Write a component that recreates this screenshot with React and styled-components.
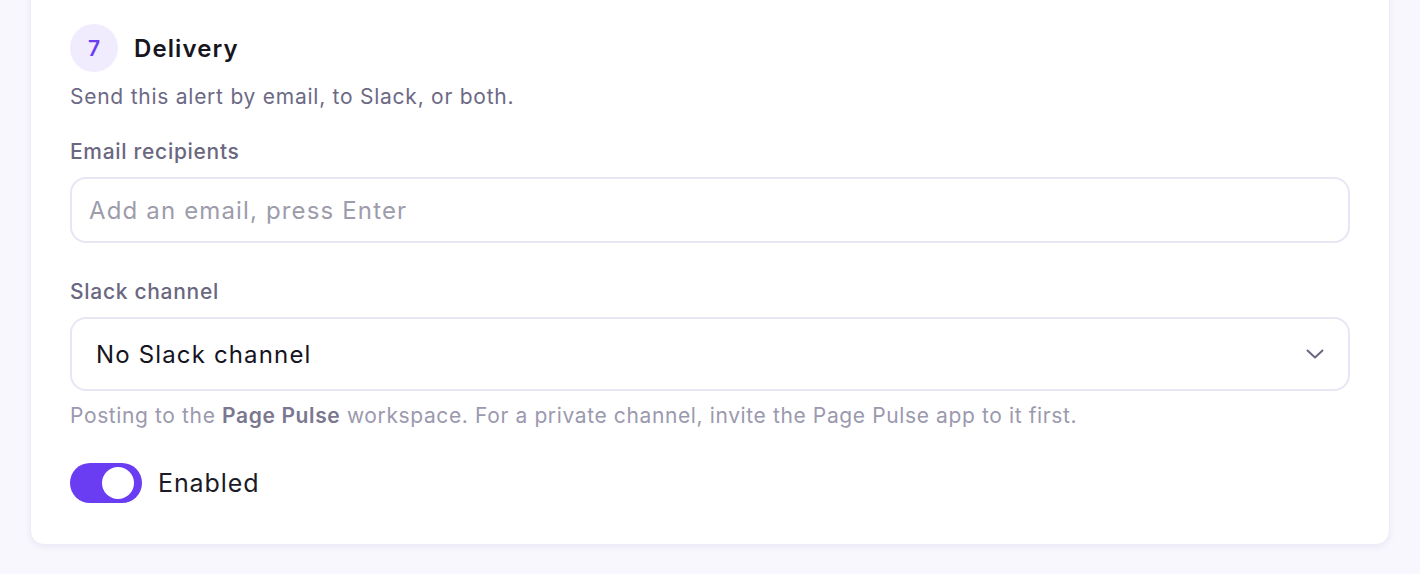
import React, { useState } from "react";
import styled, { createGlobalStyle } from "styled-components";

const GlobalStyle = createGlobalStyle`
  html, body {
    margin: 0;
    padding: 0;
    background: #f8f7fd;
    font-family: "Inter", "Lato", sans-serif;
    -webkit-font-smoothing: antialiased;
  }
`;

const Page = styled.div`
  padding: 0 30px 30px;
  min-height: 574px;
  box-sizing: border-box;
`;

const Card = styled.section`
  margin-top: -20px;
  background: #ffffff;
  border-radius: 14px;
  border: 1px solid #eeedf7;
  box-shadow: 0 2px 6px rgba(60, 40, 140, 0.07);
  padding: 43px 39px 41px;
  display: flex;
  flex-direction: column;
`;

const Header = styled.div`
  display: flex;
  align-items: center;
  gap: 16px;
`;

const StepBadge = styled.div`
  width: 48px;
  height: 48px;
  border-radius: 50%;
  background: #f0ecfd;
  color: #6a3df0;
  font-size: 21px;
  font-weight: 600;
  display: flex;
  align-items: center;
  justify-content: center;
`;

const Title = styled.h2`
  margin: 0;
  font-size: 24px;
  font-weight: 600;
  letter-spacing: 1.1px;
  color: #17161f;
`;

const Subtitle = styled.p`
  margin: 11px 0 0;
  font-size: 21px;
  line-height: 28px;
  letter-spacing: 0.75px;
  color: #6c6985;
`;

const Field = styled.div`
  display: flex;
  flex-direction: column;
  margin-top: ${(p) => p.$top}px;
`;

const Label = styled.label`
  font-size: 21px;
  line-height: 28px;
  font-weight: 500;
  letter-spacing: 0.7px;
  color: #6a6780;
  margin-bottom: 11px;
`;

const TextInput = styled.input`
  box-sizing: border-box;
  height: 66px;
  border: 2px solid #e8e6f5;
  border-radius: 16px;
  padding: 0 17px;
  font-family: inherit;
  font-size: 24px;
  letter-spacing: 1.15px;
  color: #15141e;
  outline: none;
  &::placeholder {
    color: #9d9cab;
  }
`;

const SelectBox = styled.div`
  box-sizing: border-box;
  height: 74px;
  border: 2px solid #e8e6f5;
  border-radius: 16px;
  padding: 0 24px 0 24px;
  display: flex;
  align-items: center;
  justify-content: space-between;
  font-size: 24px;
  letter-spacing: 1.15px;
  color: #15141e;
  cursor: pointer;
`;

const Help = styled.p`
  margin: 11px 0 0;
  font-size: 21px;
  line-height: 28px;
  letter-spacing: 0.62px;
  color: #9b99ae;

  strong {
    color: #7a778f;
    font-weight: 600;
  }
`;

const ToggleRow = styled.div`
  display: flex;
  align-items: center;
  gap: 16px;
  margin-top: 33px;
`;

const Track = styled.button`
  position: relative;
  width: 72px;
  height: 40px;
  border: none;
  padding: 0;
  border-radius: 20px;
  background: ${(p) => (p.$on ? "#6a3cf2" : "#d9d7e6")};
  cursor: pointer;
`;

const Knob = styled.span`
  position: absolute;
  top: 4px;
  left: ${(p) => (p.$on ? "32px" : "4px")};
  width: 32px;
  height: 32px;
  border-radius: 50%;
  background: #ffffff;
`;

const ToggleLabel = styled.span`
  font-size: 25px;
  letter-spacing: 0.9px;
  color: #1b1a26;
`;

const Chevron = () => (
  <svg width="18" height="10" viewBox="0 0 18 10" fill="none">
    <path
      d="M1.5 1.5 9 8.5l7.5-7"
      stroke="#6a6780"
      strokeWidth="2"
      strokeLinecap="round"
      strokeLinejoin="round"
    />
  </svg>
);

export default function App() {
  const [enabled, setEnabled] = useState(true);
  return (
    <Page>
      <GlobalStyle />
      <Card>
        <Header>
          <StepBadge>7</StepBadge>
          <Title>Delivery</Title>
        </Header>
        <Subtitle>Send this alert by email, to Slack, or both.</Subtitle>

        <Field $top={27}>
          <Label>Email recipients</Label>
          <TextInput placeholder="Add an email, press Enter" />
        </Field>

        <Field $top={35}>
          <Label>Slack channel</Label>
          <SelectBox>
            <span>No Slack channel</span>
            <Chevron />
          </SelectBox>
        </Field>
        <Help>
          Posting to the <strong>Page Pulse</strong> workspace. For a private
          channel, invite the Page Pulse app to it first.
        </Help>

        <ToggleRow>
          <Track $on={enabled} onClick={() => setEnabled(!enabled)}>
            <Knob $on={enabled} />
          </Track>
          <ToggleLabel>Enabled</ToggleLabel>
        </ToggleRow>
      </Card>
    </Page>
  );
}
